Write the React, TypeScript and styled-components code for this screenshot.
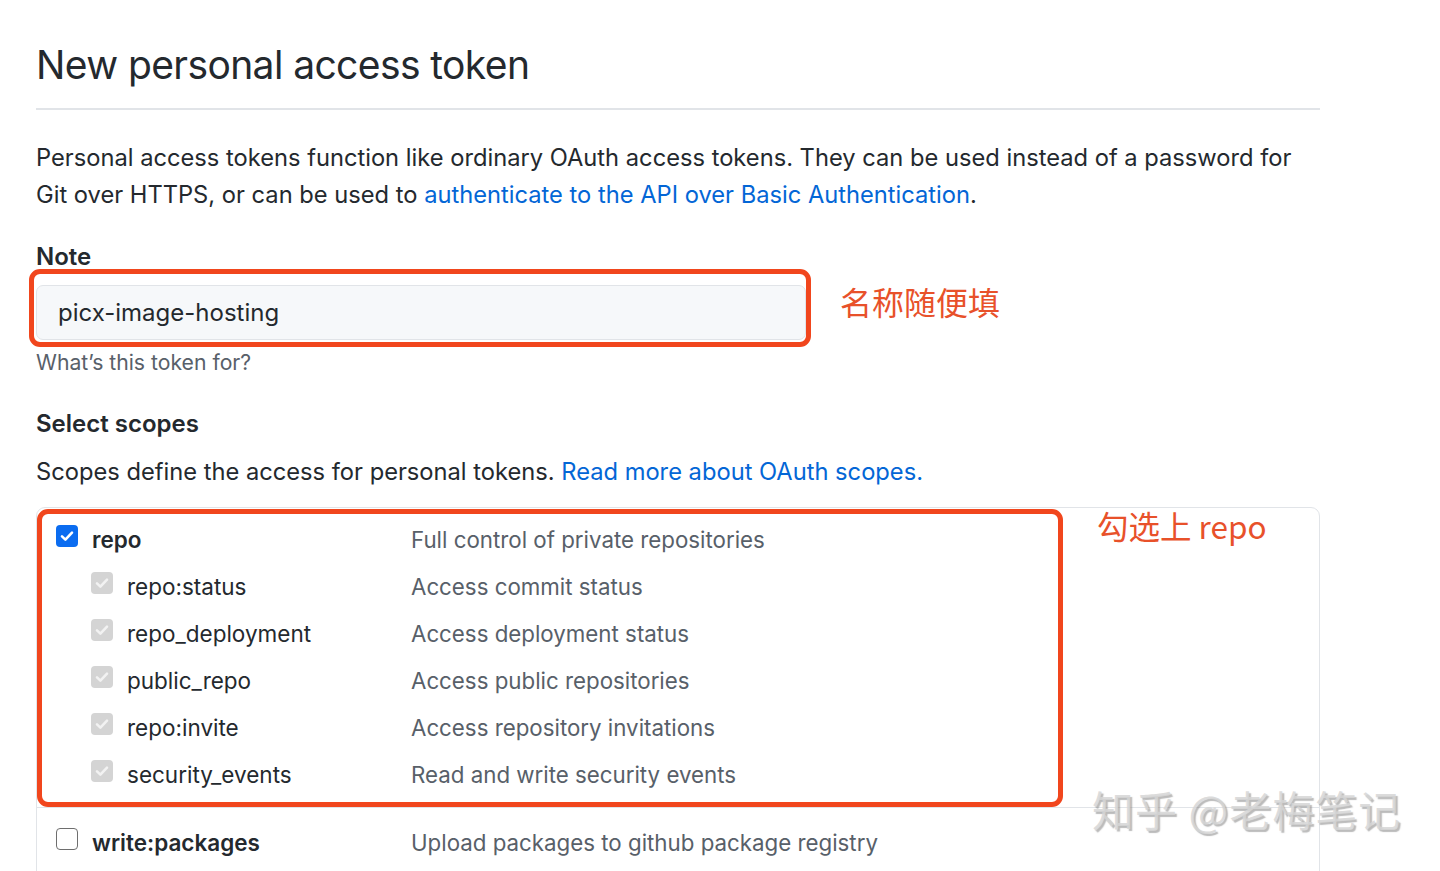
import React from "react";
import styled, { createGlobalStyle } from "styled-components";

const Global = createGlobalStyle`
  html, body { margin: 0; padding: 0; background: #fff; }
  body {
    font-family: Inter, "Noto Sans CJK SC", sans-serif;
    color: #24292e;
  }
`;

const Page = styled.div`
  position: relative;
  height: 871px;
  overflow: hidden;
  box-sizing: border-box;
  padding: 0 120px 0 36px;
`;

const Title = styled.h1`
  margin: 0;
  padding: 39px 0 17px;
  font-size: 39px;
  line-height: 52px;
  font-weight: 400;
  letter-spacing: -0.6px;
  color: #24292e;
  border-bottom: 2px solid #e1e4e8;
`;

const Lead = styled.p`
  margin: 29px 0 0;
  max-width: 1270px;
  font-size: 23.7px;
  line-height: 37px;
  color: #24292e;
`;

const Link = styled.a`
  color: #0366d6;
  text-decoration: none;
`;

const Label = styled.div<{ $top: number }>`
  margin-top: ${(p) => p.$top}px;
  font-size: 24px;
  line-height: 30px;
  font-weight: 600;
  color: #24292e;
`;

const InputRow = styled.div`
  display: flex;
  align-items: flex-start;
  margin-top: 13px;
`;

const Annotated = styled.div`
  position: relative;
`;

const RedFrame = styled.div<{ $t: number; $l: number; $r: number; $b: number }>`
  position: absolute;
  top: ${(p) => p.$t}px;
  left: ${(p) => p.$l}px;
  right: ${(p) => p.$r}px;
  bottom: ${(p) => p.$b}px;
  border: 5px solid #f1461d;
  border-radius: 11px;
  pointer-events: none;
`;

const TextInput = styled.div`
  box-sizing: border-box;
  width: 770px;
  height: 55px;
  display: flex;
  align-items: center;
  padding-left: 21px;
  background: #f6f8fa;
  border: 1px solid #e1e4e8;
  border-radius: 7px;
  font-size: 24px;
  color: #24292e;
`;

const Remark = styled.div`
  color: #e8512a;
  font-family: "Noto Sans CJK SC", sans-serif;
  font-size: 32px;
  line-height: 40px;
`;

const InputRemark = styled(Remark)`
  margin: -4px 0 0 34px;
`;

const Hint = styled.div`
  margin-top: 8px;
  font-size: 21.2px;
  line-height: 28px;
  color: #586069;
`;

const Desc = styled.p`
  margin: 14px 0 0;
  font-size: 23.7px;
  line-height: 37px;
  color: #24292e;
`;

const ScopeBox = styled.div`
  position: relative;
  margin-top: 17px;
  width: 1282px;
  border: 1px solid #e1e4e8;
  border-radius: 9px;
  padding-bottom: 40px;
`;

const Group = styled.div<{ $pt: number; $pb: number; $sep?: boolean }>`
  position: relative;
  padding: ${(p) => p.$pt}px 0 ${(p) => p.$pb}px;
  border-bottom: ${(p) => (p.$sep ? "1px solid #e1e4e8" : "none")};
`;

const Row = styled.div`
  display: grid;
  grid-template-columns: 355px 1fr;
  align-items: center;
  height: 47px;
  padding-left: 19px;
`;

const Cell = styled.div<{ $indent: boolean }>`
  display: flex;
  align-items: center;
  gap: 14px;
  padding-left: ${(p) => (p.$indent ? 35 : 0)}px;
`;

const Box = styled.span<{ $state: "on" | "off" | "dim" }>`
  box-sizing: border-box;
  width: 22px;
  height: 22px;
  margin-bottom: 7px;
  border-radius: 4px;
  display: inline-flex;
  align-items: center;
  justify-content: center;
  flex: none;
  background: ${(p) => (p.$state === "on" ? "#0b6cf0" : p.$state === "dim" ? "#d4d4d4" : "#fff")};
  border: ${(p) => (p.$state === "off" ? "1.5px solid #6e6e6e" : "none")};
`;

const ScopeName = styled.span<{ $bold: boolean }>`
  font-size: 22.5px;
  line-height: 30px;
  font-weight: ${(p) => (p.$bold ? 600 : 400)};
  color: #24292e;
`;

const ScopeDesc = styled.span`
  font-size: 22.3px;
  line-height: 30px;
  color: #586069;
`;

const BoxRemark = styled(Remark)`
  position: absolute;
  top: -3px;
  left: 1060px;
  font-size: 31.5px;
`;

const Watermark = styled.div`
  position: absolute;
  left: 1092px;
  top: 783px;
  font-family: "Noto Sans CJK SC", sans-serif;
  font-size: 42px;
  line-height: 52px;
  letter-spacing: 1px;
  color: rgba(214, 214, 214, 0.85);
  text-shadow: 2px 2px 1px rgba(120, 120, 120, 0.5);
  white-space: nowrap;
  pointer-events: none;
`;

type Scope = { name: string; desc: string; sub?: boolean; state: "on" | "off" | "dim" };

const repoScopes: Scope[] = [
  { name: "repo", desc: "Full control of private repositories", state: "on" },
  { name: "repo:status", desc: "Access commit status", sub: true, state: "dim" },
  { name: "repo_deployment", desc: "Access deployment status", sub: true, state: "dim" },
  { name: "public_repo", desc: "Access public repositories", sub: true, state: "dim" },
  { name: "repo:invite", desc: "Access repository invitations", sub: true, state: "dim" },
  { name: "security_events", desc: "Read and write security events", sub: true, state: "dim" },
];

const Check = ({ state }: { state: "on" | "off" | "dim" }) => (
  <Box $state={state}>
    {state !== "off" && (
      <svg width="16" height="16" viewBox="0 0 16 16">
        <path
          d="M3 8.4 L6.4 11.6 L13 4.6"
          fill="none"
          stroke={state === "on" ? "#fff" : "#f2f2f2"}
          strokeWidth="2.6"
          strokeLinecap="round"
          strokeLinejoin="round"
        />
      </svg>
    )}
  </Box>
);

const ScopeRow = ({ s }: { s: Scope }) => (
  <Row>
    <Cell $indent={!!s.sub}>
      <Check state={s.state} />
      <ScopeName $bold={!s.sub}>{s.name}</ScopeName>
    </Cell>
    <ScopeDesc>{s.desc}</ScopeDesc>
  </Row>
);

export default function App() {
  return (
    <Page>
      <Global />
      <Title>New personal access token</Title>
      <Lead>
        Personal access tokens function like ordinary OAuth access tokens. They can be used instead of a password for
        Git over HTTPS, or can be used to{" "}
        <Link href="#">authenticate to the API over Basic Authentication</Link>.
      </Lead>
      <Label $top={29}>Note</Label>
      <InputRow>
        <Annotated>
          <TextInput>picx-image-hosting</TextInput>
          <RedFrame $t={-16} $l={-7} $r={-5} $b={-7} />
        </Annotated>
        <InputRemark>名称随便填</InputRemark>
      </InputRow>
      <Hint>What’s this token for?</Hint>
      <Label $top={33}>Select scopes</Label>
      <Desc>
        Scopes define the access for personal tokens.{" "}
        <Link href="#">Read more about OAuth scopes.</Link>
      </Desc>
      <ScopeBox>
        <Group $pt={8} $pb={9} $sep>
          {repoScopes.map((s) => (
            <ScopeRow key={s.name} s={s} />
          ))}
          <RedFrame $t={1} $l={0} $r={256} $b={0} />
        </Group>
        <Group $pt={11} $pb={0}>
          <ScopeRow s={{ name: "write:packages", desc: "Upload packages to github package registry", state: "off" }} />
        </Group>
        <BoxRemark>勾选上 repo</BoxRemark>
      </ScopeBox>
      <Watermark>知乎 @老梅笔记</Watermark>
    </Page>
  );
}
